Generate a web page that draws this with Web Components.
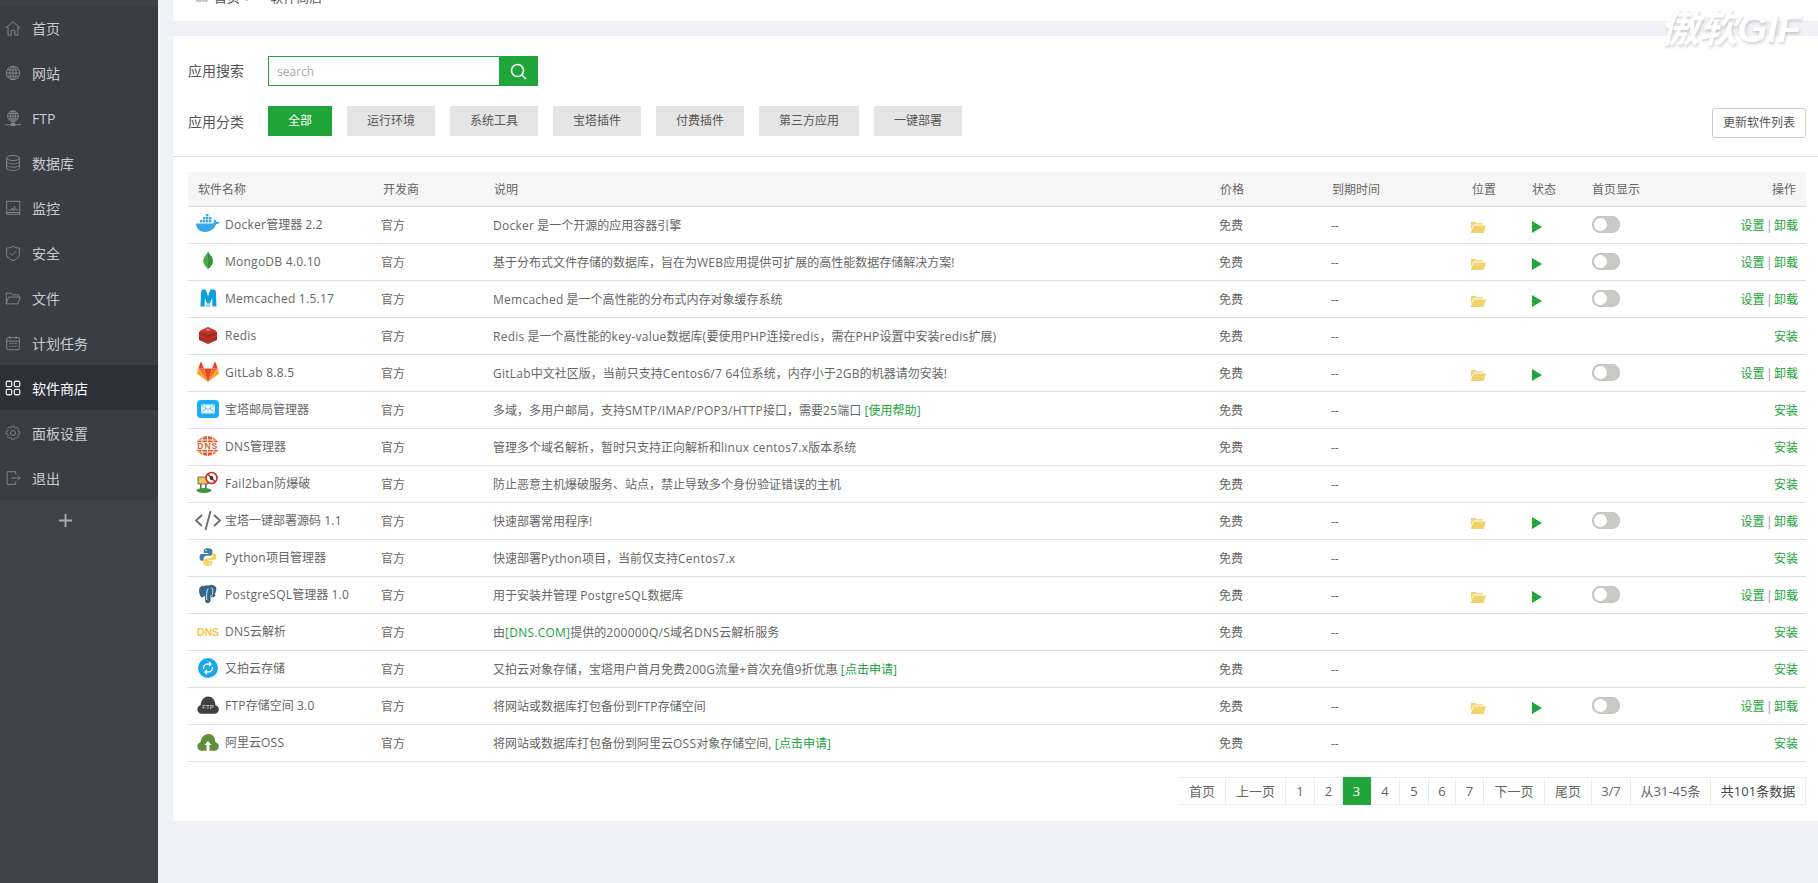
<!DOCTYPE html>
<html lang="zh"><head><meta charset="utf-8"><title>软件商店</title>
<style>
html,body{margin:0;height:100%;overflow:hidden;background:#f0f2f7;font-family:"Open Sans","Noto Sans CJK SC",sans-serif;font-size:12px;color:#666}
</style></head><body>
<bt-app></bt-app>
<script>
const G='#20a53a';
const L=s=>s.replace(/(<[^>]+>)|([\x21-\x3b=\x3f-\x7e]+(?: [\x21-\x3b=\x3f-\x7e]+)*)/g,(m,t,w)=>t?t:`<span class="l">${w}</span>`);
const navIcons={
home:'<path d="M2 10 10 3l8 7M4.500 8.500V18h3.500v-5.500h4V18h3.500V8.500"/>',
globe:'<circle cx="10" cy="10" r="7.500"/><ellipse cx="10" cy="10" rx="3.500" ry="7.500"/><path d="M2.500 10h15M3.500 6.500h13M3.500 13.500h13M10 2.500v15"/>',
ftp:'<circle cx="10" cy="8" r="6"/><ellipse cx="10" cy="8" rx="2.800" ry="6"/><path d="M4 8h12M5 5h10M5 11h10M10 2v12M10 14v3M1 17.500h18"/><rect x="8" y="16" width="4" height="2.500" fill="currentColor"/>',
db:'<ellipse cx="10" cy="4.500" rx="7" ry="2.800"/><path d="M3 4.500v11c0 1.500 3 2.800 7 2.800s7-1.300 7-2.800v-11M3 8.200c0 1.500 3 2.800 7 2.800s7-1.300 7-2.800M3 11.900c0 1.500 3 2.800 7 2.800s7-1.300 7-2.800"/>',
mon:'<rect x="3" y="2.500" width="14.500" height="14.500"/><path d="M5 12h3l1.200-2 1.300 3.500 1.200-5 1 3.500h3M3 15h14.500" />',
shield:'<path d="M10 2.500c2.500 1.500 4.500 2 7 2v7c0 3-3 5.500-7 7-4-1.500-7-4-7-7v-7c2.500 0 4.500-.5 7-2z"/><path d="M6.500 10l2.500 2.500 4.500-4.500"/>',
folder:'<path d="M2.500 16.500V4.500h5.500l1.500 2h7v2.500M2.500 16.500 5 9h13l-2.500 7.500z"/>',
cal:'<rect x="3" y="4" width="14" height="13.500" rx="1.500"/><path d="M3 8h14M6.500 2.500v3M13.500 2.500v3M6 10.500h2M9 10.500h2M12 10.500h2M6 13.500h2M9 13.500h2M12 13.500h2"/>',
grid:'<rect x="2.500" y="2.500" width="6" height="6" rx="1.300"/><rect x="11.500" y="2.500" width="6" height="6" rx="1.300"/><rect x="2.500" y="11.500" width="6" height="6" rx="1.300"/><rect x="11.500" y="11.500" width="6" height="6" rx="1.300"/>',
gear:'<circle cx="10" cy="10" r="2.800"/><path d="M8.600 2.500h2.800l.4 2.100 1.700.7 1.800-1.200 2 2-1.200 1.800.7 1.700 2.100.4v2.800l-2.100.4-.7 1.700 1.200 1.800-2 2-1.800-1.200-1.700.7-.4 2.100H8.600l-.4-2.100-1.700-.7-1.800 1.200-2-2 1.200-1.800-.7-1.700-2.100-.4V9.600l2.100-.4.7-1.700-1.200-1.800 2-2 1.800 1.200 1.700-.7z" transform="translate(1.500 .1) scale(.85)"/>',
exit:'<path d="M13 6V3H3.500v14H13v-3M8 10h10M15 7l3 3-3 3"/>'};

class BtNavItem extends HTMLElement{
 connectedCallback(){
  const a=this.hasAttribute('active');
  this.attachShadow({mode:'open'}).innerHTML=`<style>
  :host{display:flex;align-items:center;height:45px;box-sizing:border-box;padding-left:4px;background:${a?'#2c3038':'transparent'};color:${a?'#fff':'#c8ccd0'};font-size:14px}
  svg{width:18px;height:18px;margin-right:10px;flex:none;fill:none;stroke:${a?'#e8e8e8':'#85858a'};stroke-width:${a?1.4:1.1};color:${a?'#e8e8e8':'#85858a'}}
  </style><svg viewBox="0 0 20 20">${navIcons[this.getAttribute('icon')]}</svg><slot></slot>`;
 }
}
customElements.define('bt-nav-item',BtNavItem);

class BtSidebar extends HTMLElement{
 connectedCallback(){
  const items=[['home','首页'],['globe','网站'],['ftp','FTP'],['db','数据库'],['mon','监控'],['shield','安全'],['folder','文件'],['cal','计划任务'],['grid','软件商店'],['gear','面板设置'],['exit','退出']];
  this.attachShadow({mode:'open'}).innerHTML=`<style>
  :host{display:flex;flex-direction:column;width:158px;flex:none;background:#3c434d}
  .top{height:6px}
  nav{background:#383d46;display:flex;flex-direction:column;height:494px}
  .plus{display:flex;justify-content:flex-start;padding:14px 0 0 59px}
  .plus svg{width:13px;height:13px;stroke:#a9adb3;stroke-width:2;fill:none}
  </style><div class="top"></div><nav>${items.map(([i,t])=>`<bt-nav-item icon="${i}" ${t==='软件商店'?'active':''}>${t}</bt-nav-item>`).join('')}</nav>
  <div class="plus"><svg viewBox="0 0 14 14"><path d="M0 7h14M7 0v14"/></svg></div>`;
 }
}
customElements.define('bt-sidebar',BtSidebar);

class BtCrumb extends HTMLElement{
 connectedCallback(){
  this.attachShadow({mode:'open'}).innerHTML=`<style>
  :host{display:block;height:21px;overflow:hidden;background:#fff;position:relative}
  .in{display:flex;align-items:center;gap:6px;height:18px;margin-top:-13px;padding-left:23px;color:#555;font-size:13px}
  svg{width:12px;height:12px;fill:none;stroke:#999}
  i{font-style:normal;margin-right:13.500px;color:#999}
  </style><div class="in"><svg viewBox="0 0 12 12"><rect x="1" y="1" width="4" height="4"/><rect x="7" y="1" width="4" height="4"/><rect x="1" y="7" width="4" height="4"/><rect x="7" y="7" width="4" height="4"/></svg><span>首页</span><i>/</i><span>软件商店</span></div>`;
 }
}
customElements.define('bt-crumb',BtCrumb);

class BtSearch extends HTMLElement{
 connectedCallback(){
  this.attachShadow({mode:'open'}).innerHTML=`<style>
  :host{display:flex;align-items:center;height:30px}
  label{width:80px;color:#555;font-size:14px;flex:none;line-height:30px}
  .box{display:flex;height:30px;width:270px;box-sizing:border-box}
  input{width:231px;box-sizing:border-box;height:30px;border:1px solid ${G};border-right:0;outline:0;padding:0 8px;font:12px "Open Sans","Noto Sans CJK SC",sans-serif;color:#555;background:#fff}
  input::placeholder{color:#aaa;opacity:1}
  button{width:39px;height:30px;border:0;background:${G};padding:0;display:flex;align-items:center;justify-content:center}
  svg{width:17px;height:17px;stroke:#fff;stroke-width:1.600;fill:none}
  </style><label>应用搜索</label><div class="box"><input placeholder="search"><button aria-label="search"><svg viewBox="0 0 17 17"><circle cx="7.500" cy="7.500" r="6"/><path d="M12 12l4 4"/></svg></button></div>`;
 }
}
customElements.define('bt-search',BtSearch);

class BtTabs extends HTMLElement{
 connectedCallback(){
  const tabs=[['全部',64],['运行环境',88],['系统工具',88],['宝塔插件',88],['付费插件',88],['第三方应用',100],['一键部署',88]];
  this.attachShadow({mode:'open'}).innerHTML=`<style>
  :host{display:flex;align-items:center;height:30px}
  label{width:80px;color:#555;font-size:14px;flex:none}
  .tabs{display:flex;gap:15px}
  span{height:30px;line-height:30px;text-align:center;background:#e5e5e5;color:#555;font-size:12px;display:block}
  span.on{background:${G};color:#fff}
  </style><label>应用分类</label><div class="tabs">${tabs.map(([t,w],i)=>`<span class="${i?'':'on'}" style="width:${w}px">${t}</span>`).join('')}</div>`;
 }
}
customElements.define('bt-tabs',BtTabs);

const COLS='185px 112px 726px 112px 139px 60px 60px 100px 1fr';

class BtRow extends HTMLElement{
 connectedCallback(){
  const installed=this.hasAttribute('installed');
  this.attachShadow({mode:'open'}).innerHTML=`<style>
  :host{display:grid;grid-template-columns:${COLS};height:37px;box-sizing:border-box;border-bottom:1px solid #ddd;align-items:center;color:#666;font-size:12px}
  .c{padding-left:8px;white-space:nowrap}
  .l{letter-spacing:.25px}
  .name{display:flex;align-items:center;padding:0 0 2px 7px;white-space:nowrap;overflow:visible}
  .ic{width:26px;height:24px;margin-right:4px;display:flex;align-items:center;justify-content:center;flex:none}
  .folder svg{width:16px;height:12px;display:block;margin-top:3px}
  .play svg{width:10px;height:12px;display:block;margin:3px 0 0 0}
  .tog{width:28px;height:17px;background:#c9cac6;border-radius:9px;position:relative;margin-left:1px;margin-bottom:2px;box-shadow:inset 0 0 0 1px #c4c6c2}
  .tog::after{content:"";position:absolute;left:2px;top:2px;width:13px;height:13px;border-radius:50%;background:#fff}
  .ops{text-align:right;padding-right:8px;color:${G};padding-bottom:1px}
  .ops i{font-style:normal;color:#999;margin:0 1.500px}
  .t8{padding-left:9px}
  .t7{padding-left:10px}
  </style>
  <div class="name"><span class="ic"><slot name="icon"></slot></span><span>${L(this.getAttribute('name'))}</span></div>
  <div class="c">官方</div>
  <div class="c"><slot name="desc"></slot></div>
  <div class="c">免费</div>
  <div class="c">--</div>
  <div class="c folder">${installed?'<svg viewBox="0 0 16 12"><path fill="#f1d36b" d="M1 3V1h4.500l1 1.200H13v1.300H3.200L1 9z"/><path fill="#f1d36b" d="M3.600 4.500H16L13.600 12H.6z"/></svg>':''}</div>
  <div class="c t7 play">${installed?'<svg viewBox="0 0 10 12"><path fill="#20a53a" d="M0 0l10 6-10 6z"/></svg>':''}</div>
  <div class="c t8">${installed?'<div class="tog"></div>':''}</div>
  <div class="ops">${installed?'设置<i>|</i>卸载':'安装'}</div>`;
 }
}
customElements.define('bt-row',BtRow);

const S=(b,w=26,h=24)=>`<svg slot="icon" width="${w}" height="${h}" viewBox="0 0 26 24">${b}</svg>`;
const cube=(x,y)=>`<rect x="${x}" y="${y}" width="2.400" height="2.400"/>`;
const logos={
docker:S(`<g fill="#3aa7e4">${[[5,8],[8,8],[11,8],[14,8],[8,5],[11,5],[14,5],[11,2]].map(p=>cube(p[0],p[1])).join('')}</g><path fill="#39a7e5" d="M1 11.500h16c.8 0 1.600-.2 2-.7-.6-1.200-.4-2.700.5-3.500 1 .6 1.600 1.600 1.800 2.600 1-.3 2.200-.2 3.200.5-.6 1.200-1.800 1.700-3.300 1.700C19.800 16.500 16 20 10 20c-5 0-8.600-3-9-8.500z"/>`),
mongo:S(`<path fill="#4aa94c" d="M13 2.500c1 3 4.800 5 4.800 9.500 0 3.500-2.300 6-4.300 7.500h-1C11.500 18 8.200 15.500 8.200 12 8.200 7.500 12 5.500 13 2.500z"/><path fill="#3f8f41" d="M13 2.500V19.500h.5c2-1.500 4.300-4 4.300-7.500 0-4.500-3.800-6.500-4.800-9.500z"/><path fill="#c9c4b4" d="M12.500 19.500h1l-.2 1.800h-.6z"/>`),
mem:S(`<path fill="#0e9fe0" d="M7.500 3.500h3.200c.9 2.500 1.600 4.500 2.300 7 .7-2.500 1.400-4.500 2.300-7h3.200c1.400 0 2.300.9 2.400 2.300l.6 14.700h-4l-.5-9c-.6 2.300-1.200 4.200-2 6h-3c-.8-1.800-1.400-3.700-2-6l-.5 9h-4l.6-14.700c.1-1.400 1-2.300 2.400-2.300z"/><path fill="#0e9fe0" d="M11.300 18.500h1.200v2h-1.200zM13.500 18.500h1.200v2h-1.200z"/>`),
redis:S(`<path fill="#a9281f" d="M4 9v8l9 4 9-4V9z"/><path fill="#c6352b" d="M4 8l9-4 9 4-9 4zM4 11.500l9 4 9-4v1.800l-9 4-9-4zM4 15l9 4 9-4v1.500l-9 4-9-4z"/><path fill="#e88a80" d="M9 7l3-.6-.6-1.300 2 .9 2-.5-1 1.300 1.500.8-2.300-.2-.8 1.300-.7-1.500z"/>`),
gitlab:S(`<g transform="translate(1.500 1) scale(.885 .95)"><path fill="#e24329" d="M13 22l4.600-14H8.400z"/><path fill="#fc6d26" d="M13 22L8.400 8H2zM13 22l4.600-14H24z"/><path fill="#fca326" d="M2 8L.6 12.500c-.1.400 0 .8.400 1.100L13 22zM24 8l1.400 4.500c.1.400 0 .8-.4 1.100L13 22z"/><path fill="#e24329" d="M2 8l2.700-7c.1-.4.600-.4.700 0L8.400 8zM24 8l-2.700-7c-.1-.4-.6-.4-.7 0L17.600 8z"/></g>`),
mail:S(`<rect x="2" y="3" width="22" height="18" rx="4" fill="#19adfa"/><path fill="#eaf7ff" d="M6 7.500h14v9H6z"/><path fill="none" stroke="#5cc4fb" stroke-width="1" d="M6 7.500l7 5L20 7.500M6 16.500l5-5.500M20 16.500l-5-5.500"/>`),
dns:S(`<ellipse cx="12.500" cy="12" rx="11.500" ry="10" fill="#dd5b2c"/><path fill="none" stroke="#fff" stroke-width=".9" d="M12.500 2v20M8 2.800c-2 5-2 13 0 18.400M17 2.800c2 5 2 13 0 18.400M3 6h19M3 18h19"/><rect x="0" y="8.200" width="26" height="7.600" fill="#fff"/><text x="12.800" y="15.300" text-anchor="middle" font-family="Liberation Sans" font-weight="700" font-size="8.500" letter-spacing="1" fill="#dd5b2c">DNS</text>`),
f2b:S(`<path fill="#f0c75e" stroke="#555" stroke-width=".8" d="M3 6h10v7H3z"/><path fill="#7a6a4f" d="M5 13h1.600v5H5zM10 13h1.600v5H10z"/><ellipse cx="9" cy="19.500" rx="7.500" ry="2.500" fill="#3c9a3e"/><circle cx="16.500" cy="7" r="5.500" fill="#fff" stroke="#d5291f" stroke-width="1.600"/><path stroke="#d5291f" stroke-width="1.600" d="M12.800 3.200l7.400 7.500"/><circle cx="16.500" cy="7" r="1.900" fill="#333"/>`),
code:S(`<path fill="none" stroke="#6d6a6b" stroke-width="1.800" d="M7 7l-6 5.500 6 5.500M19 7l6 5.500-6 5.500M15.500 3l-5 19"/>`),
py:S(`<g transform="translate(1.500 1.500) scale(.88)"><path fill="#3f7bab" d="M12.800 2c-4 0-4.500 1.700-4.500 3v2.500h5v1H6C4 8.500 3.500 10.500 3.500 12.500s.7 3.800 2.500 3.800h2v-2.600c0-2 1.700-3.200 3.300-3.200h4.400c1.400 0 2.400-1.200 2.400-2.500V5c0-1.800-2-3-5.300-3z"/><path fill="#f5d35c" d="M13.400 22c4 0 4.500-1.700 4.500-3v-2.500h-5v-1H20c2 0 2.500-2 2.500-4s-.7-3.800-2.500-3.800h-2v2.600c0 2-1.700 3.200-3.300 3.200h-4.400c-1.400 0-2.400 1.200-2.400 2.500V19c0 1.800 2 3 5.500 3z"/><circle cx="10.800" cy="4.600" r=".9" fill="#fff"/><circle cx="15.400" cy="19.400" r=".9" fill="#fff"/></g>`),
pg:S(`<g transform="translate(3 2.500) scale(.78 .82)"><path fill="#336791" stroke="#1f3d5c" stroke-width=".8" d="M5 2.500c-2.500.5-3.500 3-3 6 .4 3 1.500 7 3.500 7 1 0 1.700-1.300 2.200-2.300.5.500 1 .7 1.800.8l.2 6c.1 1.500 1.200 2.300 3 2.200 2-.1 2.800-1 2.800-3v-4.500c2 .5 4 .5 5.800-.5 1.200-.8.500-1.600-.8-1.400 1.500-2.500 2.800-5.500 2.500-8.300-.4-2.500-3.400-3.500-6-3.500-1.500 0-2.600.3-3.500.6C11.700 1.600 8 1.800 5 2.500z"/><path fill="none" stroke="#fff" stroke-width="1" d="M13 5c-1.500 2-2 5-2 8l.2 6M17.500 4c1.500 2 2 5 1 8-.5 1.500-1.500 2.500-3 2.500"/></g>`),
dnsy:S(`<text x="13" y="16.500" text-anchor="middle" font-family="Liberation Sans" font-weight="700" font-size="10.500" fill="#f5c453">DNS</text>`),
up:S(`<circle cx="13" cy="12" r="10" fill="#18a8ee"/><path fill="none" stroke="#fff" stroke-width="1.400" d="M8.500 13c-.5-2.800 1.300-5 4.500-5h1M17.500 11c.5 2.800-1.300 5-4.500 5h-1"/><path fill="#fff" d="M14 5l3 3-3 3zM12 13l-3 3 3 3z"/>`),
ftp:S(`<g transform="translate(1.500 1.800) scale(.885 .9)"><path fill="#3f3f3f" d="M6 21c-3 0-5-2-5-4.800 0-2.300 1.500-4 3.600-4.500C5 6.500 8.500 2 13 2s8 3.500 8.400 9.700c2.300.5 3.800 2.300 3.800 4.500 0 2.800-2 4.800-5 4.800z"/></g><text x="13" y="15.800" text-anchor="middle" font-family="Liberation Sans" font-weight="700" font-size="6" fill="#bbb">FTP</text>`),
ali:S(`<g transform="translate(1.500 1.800) scale(.885 .9)"><path fill="#5f8f3a" d="M6 21c-3 0-5-2-5-4.800 0-2.300 1.500-4 3.600-4.500C5 6.500 8.500 2.500 13.500 2.500S21 6 21.400 11.700c2.300.5 3.800 2.300 3.800 4.500 0 2.800-2 4.800-5 4.800z"/></g><path fill="#fff" d="M13 11l3.500 4h-2v6h-3v-6h-2z"/>`)};

const a=t=>`<a>${t}</a>`;
const DATA=[
['docker','Docker管理器 2.2','Docker 是一个开源的应用容器引擎',1],
['mongo','MongoDB 4.0.10','基于分布式文件存储的数据库，旨在为WEB应用提供可扩展的高性能数据存储解决方案!',1],
['mem','Memcached 1.5.17','Memcached 是一个高性能的分布式内存对象缓存系统',1],
['redis','Redis','Redis 是一个高性能的key-value数据库(要使用PHP连接redis，需在PHP设置中安装redis扩展)',0],
['gitlab','GitLab 8.8.5','GitLab中文社区版，当前只支持Centos6/7 64位系统，内存小于2GB的机器请勿安装!',1],
['mail','宝塔邮局管理器','多域，多用户邮局，支持SMTP/IMAP/POP3/HTTP接口，需要25端口 '+a('[使用帮助]'),0],
['dns','DNS管理器','管理多个域名解析，暂时只支持正向解析和linux centos7.x版本系统',0],
['f2b','Fail2ban防爆破','防止恶意主机爆破服务、站点，禁止导致多个身份验证错误的主机',0],
['code','宝塔一键部署源码 1.1','快速部署常用程序!',1],
['py','Python项目管理器','快速部署Python项目，当前仅支持Centos7.x',0],
['pg','PostgreSQL管理器 1.0','用于安装并管理 PostgreSQL数据库',1],
['dnsy','DNS云解析','由'+a('[DNS.COM]')+'提供的200000Q/S域名DNS云解析服务',0],
['up','又拍云存储','又拍云对象存储，宝塔用户首月免费200G流量+首次充值9折优惠 '+a('[点击申请]'),0],
['ftp','FTP存储空间 3.0','将网站或数据库打包备份到FTP存储空间',1],
['ali','阿里云OSS','将网站或数据库打包备份到阿里云OSS对象存储空间, '+a('[点击申请]'),0]];

class BtTable extends HTMLElement{
 connectedCallback(){
  const h=['软件名称','开发商','说明','价格','到期时间','位置','状态','首页显示','操作'];
  this.attachShadow({mode:'open'}).innerHTML=`<style>
  :host{display:block}
  .head{display:grid;grid-template-columns:${COLS};height:35px;box-sizing:border-box;background:#f6f6f6;border-bottom:1px solid #ddd;align-items:center;color:#666;font-size:12px}
  .head span{padding-left:10px;white-space:nowrap}
  .head span:nth-child(3),.head span:nth-child(4),.head span:nth-child(5){padding-left:9px}
  .head span:last-child{text-align:right;padding-right:10px}
  a{color:${G}}
  .l{letter-spacing:.25px}
  </style><div class="head">${h.map(t=>`<span>${t}</span>`).join('')}</div>
  ${DATA.map(d=>`<bt-row name="${d[1]}" ${d[3]?'installed':''}>${logos[d[0]]}<span slot="desc">${L(d[2])}</span></bt-row>`).join('')}`;
 }
}
customElements.define('bt-table',BtTable);

class BtPager extends HTMLElement{
 connectedCallback(){
  const it=[['首页',47],['上一页',60],['1',29],['2',28],['3',28],['4',29],['5',29],['6',27],['7',28],['下一页',61],['尾页',47],['3/7',39],['从31-45条',80],['共101条数据',95]];
  this.attachShadow({mode:'open'}).innerHTML=`<style>
  :host{display:flex;justify-content:flex-end;height:28px}
  span{display:block;height:28px;line-height:26px;box-sizing:border-box;border:1px solid #ececec;border-left-width:0;text-align:center;color:#666;font-size:13px;background:#fff;white-space:nowrap}
  span:first-child{border-left-width:1px}
  span.on{background:${G};border-color:${G};color:#fff}
  span.last{color:#444}
  </style>${it.map(([t,w],i)=>`<span class="${t==='3'?'on':''}${i===13?'last':''}" style="width:${w}px">${t}</span>`).join('')}`;
 }
}
customElements.define('bt-pager',BtPager);

class BtMark extends HTMLElement{
 connectedCallback(){
  this.attachShadow({mode:'open'}).innerHTML=`<style>
  :host{position:absolute;left:1660px;top:7px;font:italic 700 39px/44px "Liberation Sans","Noto Sans CJK SC",sans-serif;color:#fff;text-shadow:1px 2px 3px rgba(0,0,0,.18);letter-spacing:-.5px;white-space:nowrap}
  </style><slot></slot>`;
 }
}
customElements.define('bt-mark',BtMark);

class BtApp extends HTMLElement{
 connectedCallback(){
  this.attachShadow({mode:'open'}).innerHTML=`<style>
  :host{display:flex;height:883px;overflow:hidden;position:relative}
  main{flex:1;padding-left:15px;display:flex;flex-direction:column;gap:15px;min-width:0}
  .card{background:#fff;height:785px;box-sizing:border-box}
  .filters{height:121px;border-bottom:1px solid #e0e0e0;box-sizing:border-box;padding:20px 12px 0 15px;display:flex;flex-direction:column;gap:20px;position:relative}
  .upd{position:absolute;right:12px;top:72px;width:94px;height:30px;box-sizing:border-box;border:1px solid #ccc;border-radius:3px;background:#fff;color:#555;font:12px/28px "Open Sans","Noto Sans CJK SC",sans-serif;text-align:center}
  .wrap{padding:15px 12px 0 15px}
  bt-pager{margin-top:15px}
  </style><bt-sidebar></bt-sidebar><main><bt-crumb></bt-crumb><div class="card">
  <div class="filters"><bt-search></bt-search><bt-tabs></bt-tabs><div class="upd">更新软件列表</div></div>
  <div class="wrap"><bt-table></bt-table><bt-pager></bt-pager></div></div></main><bt-mark>傲软GIF</bt-mark>`;
 }
}
customElements.define('bt-app',BtApp);
</script></body></html>
